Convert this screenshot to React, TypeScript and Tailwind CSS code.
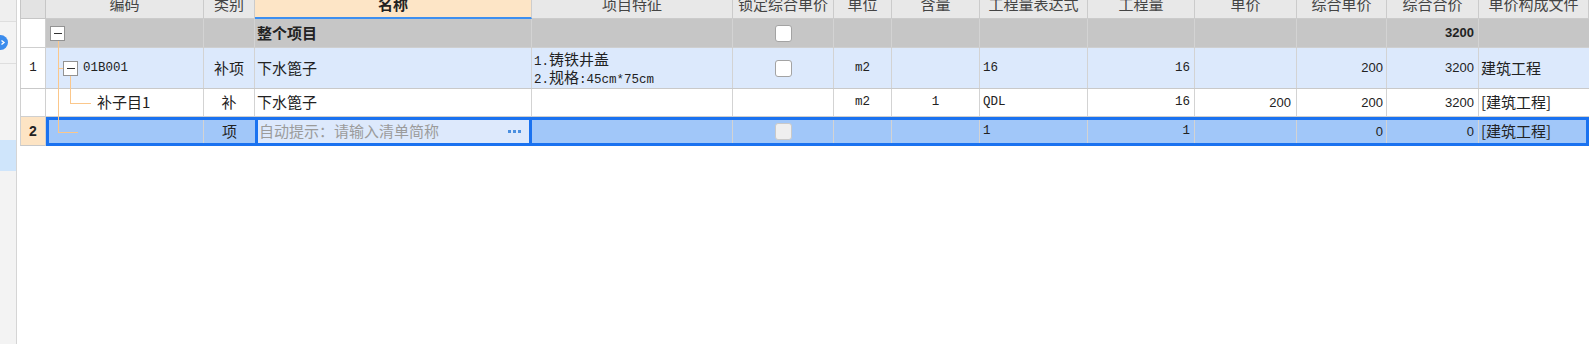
import React from 'react';

const cjk = "font-['Noto_Sans_CJK_SC',sans-serif]";
const mono = "font-['Liberation_Mono','Noto_Sans_CJK_SC',monospace] text-[12.5px]";
const num = "font-['Liberation_Sans',Arial,sans-serif] text-[13px]";

const widths = [
  'w-[158px]',
  'w-[51px]',
  'w-[277px]',
  'w-[201px]',
  'w-[101px]',
  'w-[58px]',
  'w-[88px]',
  'w-[108px]',
  'w-[107px]',
  'w-[102px]',
  'w-[90px]',
  'w-[92px]',
  'flex-1',
];

const headers = [
  '编码',
  '类别',
  '名称',
  '项目特征',
  '锁定综合单价',
  '单位',
  '含量',
  '工程量表达式',
  '工程量',
  '单价',
  '综合单价',
  '综合合价',
  '单价构成文件',
];

function Cell({ w, className = '', children }: { w: string; className?: string; children?: React.ReactNode }) {
  return (
    <div className={`${w} shrink-0 min-w-0 h-full flex items-center border-r border-[#d3d3d3] whitespace-nowrap ${className}`}>
      {children}
    </div>
  );
}

function Check({ disabled = false }: { disabled?: boolean }) {
  return (
    <span
      className={`block w-[17px] h-[17px] rounded-[3px] border ${
        disabled ? 'border-[#c9c9c9] bg-[#efefef]' : 'border-[#a3a3a3] bg-white'
      }`}
    />
  );
}

function Minus() {
  return (
    <span className="flex w-[15px] h-[15px] shrink-0 items-center justify-center border border-[#939393] bg-white">
      <span className="block w-[8px] h-px bg-[#333]" />
    </span>
  );
}

function RowHead({ children, active = false }: { children?: React.ReactNode; active?: boolean }) {
  return (
    <div
      className={`w-[26px] shrink-0 h-full flex items-center justify-center border-l border-r border-[#d0d0d0] ${
        active ? 'bg-[#fde4c4] border-b border-b-[#c8c8c8]' : 'bg-white'
      }`}
    >
      {children}
    </div>
  );
}

function HeaderRow() {
  return (
    <div className={`flex h-[19px] ${cjk} text-[15px]`}>
      <div className="w-[26px] shrink-0 border-l border-r border-b border-[#c6c6c6] bg-[#e3e3e3]" />
      {headers.map((h, i) =>
        i === 2 ? (
          <div
            key={h}
            className={`${widths[i]} shrink-0 flex justify-center overflow-hidden bg-[#fde5c6] border-r border-r-[#cdcdcd] border-b-2 border-b-[#3d8ff0] font-bold text-[#222]`}
          >
            <span className="leading-[15px] -mt-[4px]">{h}</span>
          </div>
        ) : (
          <div
            key={h}
            className={`${widths[i]} shrink-0 flex justify-center overflow-hidden bg-[#e8e8e8] border-r border-b border-[#cbcbcb] text-[#444]`}
          >
            <span className="leading-[15px] -mt-[4px]">{h}</span>
          </div>
        )
      )}
    </div>
  );
}

function TreeLines() {
  // connector lines of the tree in the 编码 column
  return (
    <svg className="absolute left-0 top-0 pointer-events-none" width="120" height="150">
      <g stroke="#fbc78b" strokeWidth="1" fill="none">
        <line x1="38.5" y1="41" x2="38.5" y2="132.5" />
        <line x1="38" y1="132.5" x2="58" y2="132.5" />
        <line x1="38" y1="68.5" x2="43" y2="68.5" />
        <line x1="50.5" y1="76" x2="50.5" y2="103.5" />
        <line x1="50" y1="103.5" x2="71" y2="103.5" />
      </g>
    </svg>
  );
}

function Sidebar() {
  return (
    <div className="w-[17px] shrink-0 h-full flex flex-col bg-[#f3f3f3] border-r border-[#d5d5d5] overflow-hidden">
      <div className="h-[22px] shrink-0 border-b border-[#dedede] bg-[#efefef]" />
      <div className="h-[42px] shrink-0 border-b border-[#dedede] pt-[13px]">
        <div className="-ml-[7px] w-[15px] h-[15px] rounded-full bg-[#3b8ced] flex items-center justify-end pr-[2px]">
          <svg width="5" height="7" viewBox="0 0 5 7">
            <path d="M0.5 1.5 L3 3.5 L0.5 5.5" stroke="#fff" strokeWidth="1.4" fill="none" />
          </svg>
        </div>
      </div>
      <div className="h-[76px] shrink-0" />
      <div className="h-[31px] shrink-0 bg-[#cfe5fb]" />
    </div>
  );
}

export default function App() {
  return (
    <div className={`flex w-[1589px] h-[344px] bg-white overflow-hidden text-[#222] ${cjk}`}>
      <Sidebar />
      <div className="relative flex-1 ml-[3px] flex flex-col text-[15px]">
        <HeaderRow />

        {/* 整个项目 */}
        <div className="flex h-[29px] border-b border-[#cfcfcf]">
          <RowHead />
          <div className="flex flex-1 h-full bg-[#c6c6c6]">
            <Cell w={widths[0]} className="pl-[4px]">
              <Minus />
            </Cell>
            <Cell w={widths[1]} />
            <Cell w={widths[2]} className="pl-[2px] font-bold">
              整个项目
            </Cell>
            <Cell w={widths[3]} />
            <Cell w={widths[4]} className="justify-center">
              <Check />
            </Cell>
            <Cell w={widths[5]} />
            <Cell w={widths[6]} />
            <Cell w={widths[7]} />
            <Cell w={widths[8]} />
            <Cell w={widths[9]} />
            <Cell w={widths[10]} />
            <Cell w={widths[11]} className={`justify-end pr-[4px] font-bold ${num}`}>
              3200
            </Cell>
            <Cell w={widths[12]} className="border-r-0" />
          </div>
        </div>

        {/* 01B001 */}
        <div className="flex h-[41px] border-b border-[#c9c9c9]">
          <RowHead>
            <span className={mono}>1</span>
          </RowHead>
          <div className="flex flex-1 h-full bg-[#dce9fc]">
            <Cell w={widths[0]} className="pl-[17px]">
              <Minus />
              <span className={`ml-[5px] ${mono}`}>01B001</span>
            </Cell>
            <Cell w={widths[1]} className="justify-center">
              补项
            </Cell>
            <Cell w={widths[2]} className="pl-[2px]">
              下水篦子
            </Cell>
            <Cell w={widths[3]} className="pl-[2px]">
              <div className="flex flex-col">
                <span className="flex items-baseline h-[18px] leading-[18px]">
                  <span className={mono}>1.</span>
                  <span>铸铁井盖</span>
                </span>
                <span className="flex items-baseline h-[18px] leading-[18px]">
                  <span className={mono}>2.</span>
                  <span>规格</span>
                  <span className={mono}>:45cm*75cm</span>
                </span>
              </div>
            </Cell>
            <Cell w={widths[4]} className="justify-center">
              <Check />
            </Cell>
            <Cell w={widths[5]} className={`justify-center ${mono}`}>
              m2
            </Cell>
            <Cell w={widths[6]} />
            <Cell w={widths[7]} className={`pl-[3px] ${mono}`}>
              16
            </Cell>
            <Cell w={widths[8]} className={`justify-end pr-[4px] ${mono}`}>
              16
            </Cell>
            <Cell w={widths[9]} />
            <Cell w={widths[10]} className={`justify-end pr-[3px] ${num}`}>
              200
            </Cell>
            <Cell w={widths[11]} className={`justify-end pr-[4px] ${num}`}>
              3200
            </Cell>
            <Cell w={widths[12]} className="pl-[2px] border-r-0">
              建筑工程
            </Cell>
          </div>
        </div>

        {/* 补子目1 */}
        <div className="flex h-[28px] border-b border-[#cfcfcf]">
          <RowHead />
          <div className="flex flex-1 h-full bg-white">
            <Cell w={widths[0]} className="pl-[51px]">
              补子目1
            </Cell>
            <Cell w={widths[1]} className="justify-center">
              补
            </Cell>
            <Cell w={widths[2]} className="pl-[2px]">
              下水篦子
            </Cell>
            <Cell w={widths[3]} />
            <Cell w={widths[4]} />
            <Cell w={widths[5]} className={`justify-center ${mono}`}>
              m2
            </Cell>
            <Cell w={widths[6]} className={`justify-center ${mono}`}>
              1
            </Cell>
            <Cell w={widths[7]} className={`pl-[3px] ${mono}`}>
              QDL
            </Cell>
            <Cell w={widths[8]} className={`justify-end pr-[4px] ${mono}`}>
              16
            </Cell>
            <Cell w={widths[9]} className={`justify-end pr-[5px] ${num}`}>
              200
            </Cell>
            <Cell w={widths[10]} className={`justify-end pr-[3px] ${num}`}>
              200
            </Cell>
            <Cell w={widths[11]} className={`justify-end pr-[4px] ${num}`}>
              3200
            </Cell>
            <Cell w={widths[12]} className="pl-[2px] border-r-0">
              [建筑工程]
            </Cell>
          </div>
        </div>

        {/* 新增行 (selected) */}
        <div className="flex h-[29px]">
          <RowHead active>
            <span className={`font-bold text-[14px] font-['Liberation_Sans',Arial,sans-serif]`}>2</span>
          </RowHead>
          <div className="flex flex-1 h-full bg-[#a1c7f9] border-[3px] border-[#1a72f0]">
            <Cell w="w-[155px]" className="border-[#b3c3d8]" />
            <Cell w={widths[1]} className="justify-center border-r-0">
              项
            </Cell>
            <div className={`${widths[2]} shrink-0 h-full flex items-center bg-[#dde9fc] border-x-[3px] border-[#1a72f0] pl-[1px] whitespace-nowrap`}>
              <span className="text-[#9b9b9b]">自动提示：请输入清单简称</span>
              <span className="ml-auto mr-[8px] flex gap-[2px]">
                <span className="block w-[3px] h-[3px] bg-[#4a8fe0]" />
                <span className="block w-[3px] h-[3px] bg-[#4a8fe0]" />
                <span className="block w-[3px] h-[3px] bg-[#4a8fe0]" />
              </span>
            </div>
            <Cell w={widths[3]} className="border-[#b3c3d8]" />
            <Cell w={widths[4]} className="justify-center border-[#b3c3d8]">
              <Check disabled />
            </Cell>
            <Cell w={widths[5]} className="border-[#b3c3d8]" />
            <Cell w={widths[6]} className="border-[#b3c3d8]" />
            <Cell w={widths[7]} className={`pl-[3px] border-[#b3c3d8] ${mono}`}>
              1
            </Cell>
            <Cell w={widths[8]} className={`justify-end pr-[4px] border-[#b3c3d8] ${mono}`}>
              1
            </Cell>
            <Cell w={widths[9]} className="border-[#b3c3d8]" />
            <Cell w={widths[10]} className={`justify-end pr-[3px] border-[#b3c3d8] ${num}`}>
              0
            </Cell>
            <Cell w={widths[11]} className={`justify-end pr-[4px] border-[#b3c3d8] ${num}`}>
              0
            </Cell>
            <Cell w={widths[12]} className="pl-[2px] border-r-0">
              [建筑工程]
            </Cell>
          </div>
        </div>

        <TreeLines />
      </div>
    </div>
  );
}
